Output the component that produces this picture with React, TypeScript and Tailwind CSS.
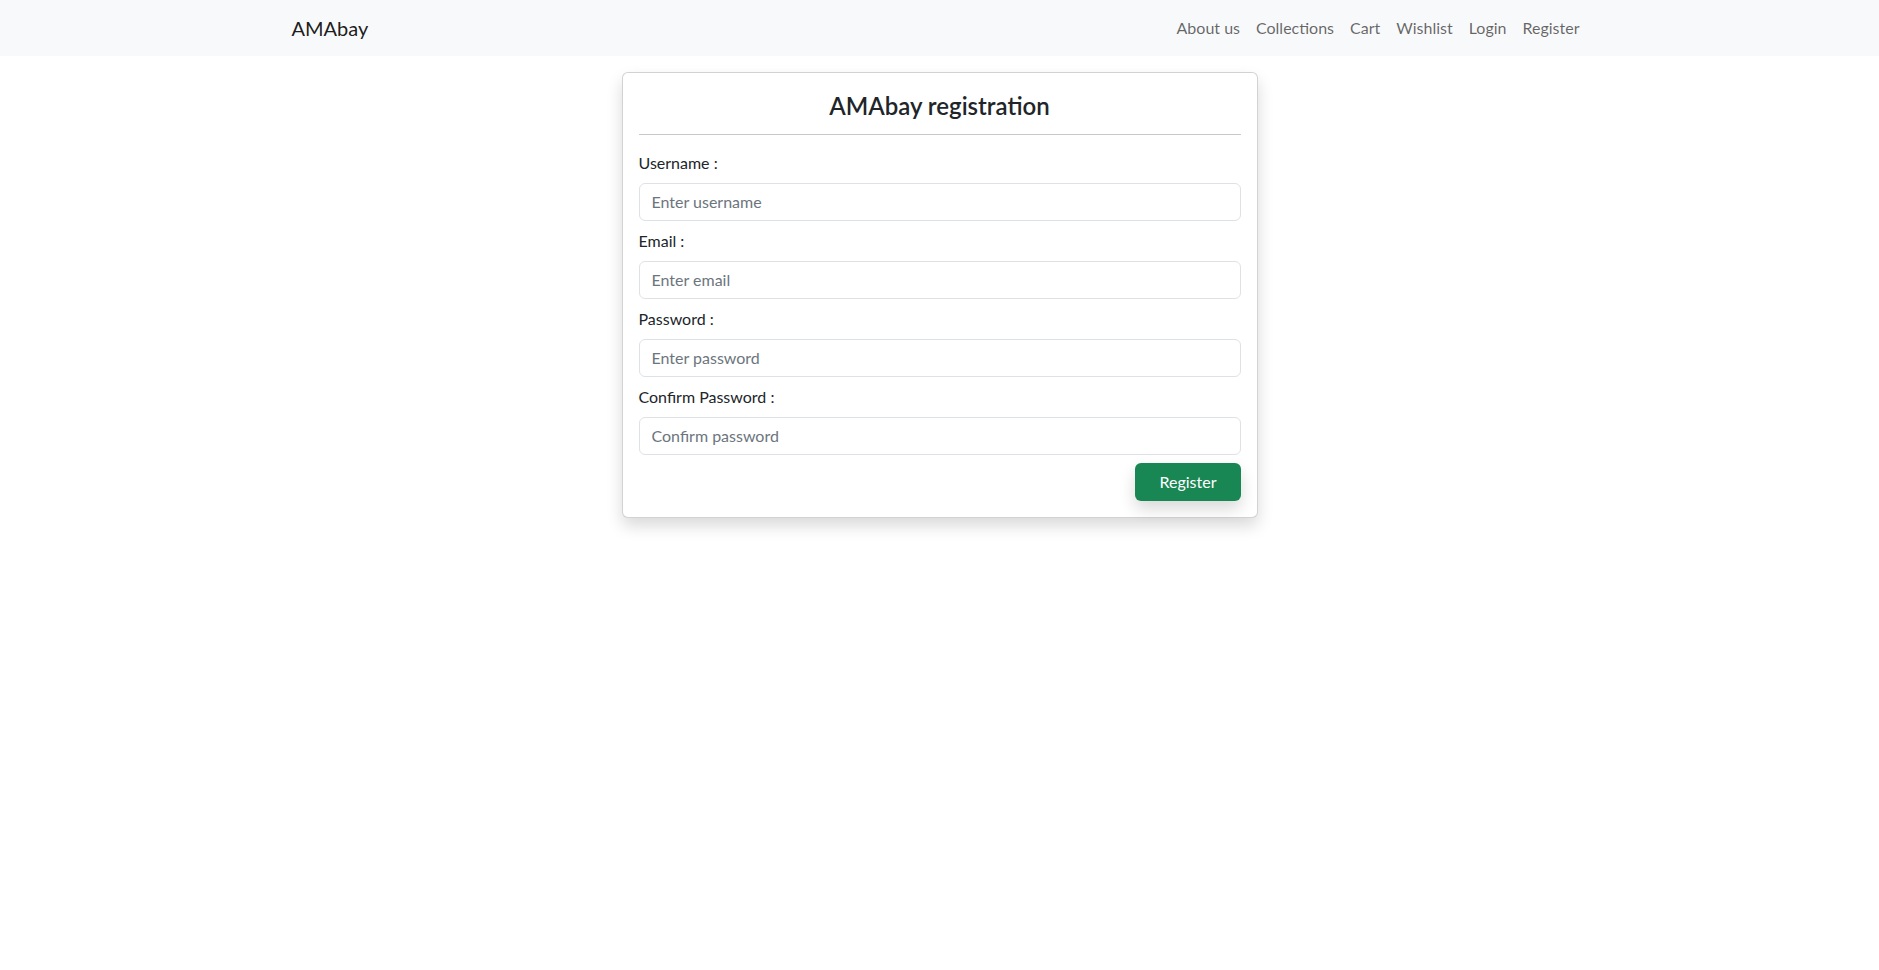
import React from "react";

const font = { fontFamily: "Lato, 'Noto Sans', sans-serif" };

function Field({ label, placeholder, type = "text" }: { label: string; placeholder: string; type?: string }) {
  return (
    <div className="mb-2">
      <label className="block text-base leading-6 mb-2 text-[#212529]">{label}</label>
      <input
        type={type}
        placeholder={placeholder}
        className="block w-full h-[38px] px-3 text-base text-[#212529] bg-white border border-[#dee2e6] rounded-md outline-none placeholder:text-[#6c757d]"
      />
    </div>
  );
}

export default function App() {
  const links = ["About us", "Collections", "Cart", "Wishlist", "Login", "Register"];
  return (
    <div className="min-h-screen bg-white text-[#212529]" style={font}>
      <nav className="bg-[#f8f9fa] h-14">
        <div className="w-[1320px] mx-auto px-3 h-full flex items-center justify-between">
          <a className="text-xl leading-[30px] text-[rgba(0,0,0,0.9)]">AMAbay</a>
          <div className="flex items-center">
            {links.map((l) => (
              <a key={l} className="px-2 py-2 text-base leading-6 text-[rgba(0,0,0,0.6)]">
                {l}
              </a>
            ))}
          </div>
        </div>
      </nav>
      <div className="w-[636px] mx-auto mt-4 bg-white border border-[rgba(0,0,0,0.175)] rounded-md shadow-[0_8px_16px_rgba(0,0,0,0.15)] p-4">
        <h4 className="pt-[3px] text-2xl font-semibold leading-[1.2] text-center text-[#212529]">AMAbay registration</h4>
        <hr className="mt-[13px] mb-4 border-0 border-t border-[#c8c9ca]" />
        <Field label="Username :" placeholder="Enter username" />
        <Field label="Email :" placeholder="Enter email" type="email" />
        <Field label="Password :" placeholder="Enter password" type="password" />
        <Field label="Confirm Password :" placeholder="Confirm password" type="password" />
        <div className="flex justify-end">
          <button className="h-[38px] px-6 rounded-md bg-[#198754] text-white text-base shadow-[0_8px_16px_rgba(0,0,0,0.15)]">
            Register
          </button>
        </div>
      </div>
    </div>
  );
}
